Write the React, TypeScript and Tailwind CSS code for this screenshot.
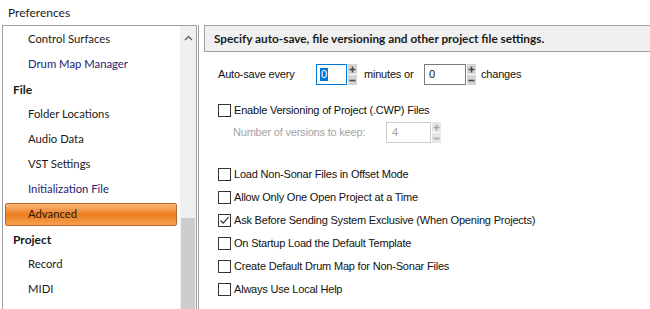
import React from 'react'

type NavItem = { label: string; kind: 'item' | 'group' | 'link' | 'active' }

const navItems: NavItem[] = [
  { label: 'Control Surfaces', kind: 'item' },
  { label: 'Drum Map Manager', kind: 'link' },
  { label: 'File', kind: 'group' },
  { label: 'Folder Locations', kind: 'item' },
  { label: 'Audio Data', kind: 'item' },
  { label: 'VST Settings', kind: 'item' },
  { label: 'Initialization File', kind: 'link' },
  { label: 'Advanced', kind: 'active' },
  { label: 'Project', kind: 'group' },
  { label: 'Record', kind: 'item' },
  { label: 'MIDI', kind: 'item' },
]

const options = [
  { label: 'Load Non-Sonar Files in Offset Mode', checked: false },
  { label: 'Allow Only One Open Project at a Time', checked: false },
  { label: 'Ask Before Sending System Exclusive (When Opening Projects)', checked: true },
  { label: 'On Startup Load the Default Template', checked: false },
  { label: 'Create Default Drum Map for Non-Sonar Files', checked: false },
  { label: 'Always Use Local Help', checked: false },
]

const uiFont = 'font-["Lato","Open_Sans",sans-serif]'
const formFont = 'font-["Liberation_Sans",Arial,sans-serif]'

export default function App() {
  return (
    <div className={`w-[650px] h-[309px] bg-white overflow-hidden flex flex-col ${uiFont}`}>
      {/* Title */}
      <div className="h-[25px] pl-[8px] flex items-center text-[12px] text-[#1a1a1a]">Preferences</div>

      <div className="flex flex-1 min-h-0">
        {/* Left tree */}
        <div className="ml-[2px] w-[195px] flex border-l border-t border-r border-[#a0a0a0]">
          <div className="flex-1 pt-[1px]">
            {navItems.map((item) => (
              <NavRow key={item.label} item={item} />
            ))}
          </div>
          {/* Scrollbar */}
          <div className="w-[16px] bg-[#f0f0f0] flex flex-col">
            <div className="h-[24px] flex items-center justify-center">
              <svg width="9" height="6" viewBox="0 0 9 6">
                <path d="M1 5 L4.5 1.5 L8 5" fill="none" stroke="#606060" strokeWidth="1.4" />
              </svg>
            </div>
            <div className="h-[168px]" />
            <div className="flex-1 mx-[1px] bg-[#cdcdcd]" />
          </div>
        </div>
        <div className="ml-[1px] w-[1px] bg-[#a0a0a0]" />

        {/* Right panel */}
        <div className="flex-1 flex flex-col">
          <div className="ml-[5px] h-[27px] flex items-center pl-[9px] bg-[#f0f0f0] border-l border-t border-b border-[#a0a0a0] font-bold text-[11.8px] text-[#1a1a1a]">
            Specify auto-save, file versioning and other project file settings.
          </div>

          <div className={`pl-[19px] text-[11px] tracking-[-0.2px] text-[#111] ${formFont}`}>
            {/* Auto-save row */}
            <div className="mt-[12px] h-[21px] flex items-center">
              <span className="w-[98px]">Auto-save every</span>
              <div className="w-[31px] h-[21px] border border-[#0078d7] flex items-center pl-[3px]">
                <span className="bg-[#0078d7] text-white leading-[13px] px-[1px]">0</span>
              </div>
              <Spinner />
              <span className="ml-[7px] w-[60px]">minutes or</span>
              <div className="w-[42px] h-[21px] border border-[#7a7a7a] flex items-center pl-[4px]">0</div>
              <Spinner />
              <span className="ml-[5px]">changes</span>
            </div>

            {/* Versioning */}
            <div className="mt-[17px] h-[17px] flex items-center">
              <Checkbox checked={false} />
              <span className="ml-[3px]">Enable Versioning of Project (.CWP) Files</span>
            </div>
            <div className="mt-[3px] h-[21px] flex items-center pl-[15px] text-[#a3a3a3]">
              <span className="w-[153px]">Number of versions to keep:</span>
              <div className="w-[45px] h-[21px] border border-[#cccccc] flex items-center pl-[5px]">4</div>
              <Spinner disabled />
            </div>

            {/* Options */}
            <div className="mt-[20px] flex flex-col">
              {options.map((o) => (
                <div key={o.label} className="h-[23px] flex items-center">
                  <Checkbox checked={o.checked} />
                  <span className="ml-[3px]">{o.label}</span>
                </div>
              ))}
            </div>
          </div>
        </div>
      </div>
    </div>
  )
}

function NavRow({ item }: { item: NavItem }) {
  if (item.kind === 'group') {
    return (
      <div className="h-[25px] flex items-center pl-[10px] font-bold text-[12px] text-[#1a1a1a]">{item.label}</div>
    )
  }
  if (item.kind === 'active') {
    return (
      <div className="h-[25px] flex items-center pl-[2px] pr-[3px]">
        <div className="w-full h-[23px] flex items-center pl-[22px] rounded-[2px] border border-[#b8642a] bg-gradient-to-b from-[#fbb776] via-[#ec7d1c] to-[#f7a04e] text-[11.3px] text-[#2b1a0e]">
          {item.label}
        </div>
      </div>
    )
  }
  return (
    <div
      className={`h-[25px] flex items-center pl-[25px] text-[11.3px] ${
        item.kind === 'link' ? 'text-[#23236e]' : 'text-[#1a1a1a]'
      }`}
    >
      {item.label}
    </div>
  )
}

function Checkbox({ checked }: { checked: boolean }) {
  return (
    <div className="w-[13px] h-[13px] border border-[#333] bg-white flex items-center justify-center shrink-0">
      {checked && (
        <svg width="11" height="11" viewBox="0 0 11 11">
          <path d="M1.5 5.5 L4.2 8.2 L9.5 2.2" fill="none" stroke="#333" strokeWidth="1.2" />
        </svg>
      )}
    </div>
  )
}

function Spinner({ disabled = false }: { disabled?: boolean }) {
  const bg = disabled ? 'bg-[#e6e6e6]' : 'bg-[#d4d4d4]'
  const fg = disabled ? '#a8a8a8' : '#4a4a4a'
  return (
    <div className="ml-[1px] w-[9px] h-[21px] flex flex-col gap-[1px]">
      <div className={`flex-1 ${bg} flex items-center justify-center`}>
        <svg width="7" height="7" viewBox="0 0 7 7">
          <path d="M0.5 3.5 H6.5 M3.5 0.5 V6.5" stroke={fg} strokeWidth="1.6" />
        </svg>
      </div>
      <div className={`flex-1 ${bg} flex items-center justify-center`}>
        <svg width="7" height="7" viewBox="0 0 7 7">
          <path d="M0.5 3.5 H6.5" stroke={fg} strokeWidth="1.6" />
        </svg>
      </div>
    </div>
  )
}
